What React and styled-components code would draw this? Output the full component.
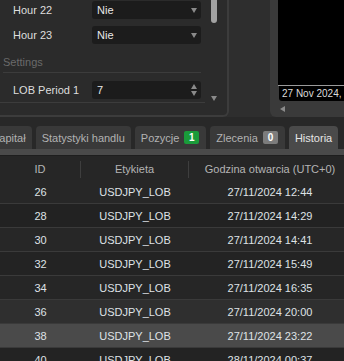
import React from "react";
import styled, { createGlobalStyle } from "styled-components";

const Global = createGlobalStyle`
  html, body { margin: 0; padding: 0; background: #282828; }
  body { font-family: "Liberation Sans", Arial, sans-serif; font-size: 11px; overflow: hidden; }
  #root { width: 344px; height: 361px; overflow: hidden; }
`;

const Page = styled.div`
  width: 344px;
  height: 361px;
  overflow: hidden;
  display: flex;
  flex-direction: column;
  background: #282828;
`;

const Top = styled.div`
  display: flex;
  height: 117px;
  flex: none;
  background: #2e2e2e;
`;

const SettingsPanel = styled.div`
  width: 229px;
  flex: none;
  box-sizing: border-box;
  background: #2b2b2b;
  border-right: 2px solid #3c3c3c;
  border-bottom: 2px solid #3c3c3c;
  border-bottom-right-radius: 6px;
  display: flex;
`;

const Form = styled.div`
  width: 206px;
  display: flex;
  flex-direction: column;
  padding-top: 1px;
`;

const Field = styled.div`
  display: flex;
  align-items: center;
  height: 18px;
  margin-top: ${(p) => p.$mt || 0}px;
`;

const Label = styled.div`
  width: 92px;
  box-sizing: border-box;
  padding-left: 13px;
  color: #dedede;
  white-space: nowrap;
`;

const Select = styled.div`
  width: 109px;
  height: 18px;
  box-sizing: border-box;
  background: #1c1c1c;
  border-radius: 3px;
  display: flex;
  align-items: center;
  justify-content: space-between;
  padding: 0 4px 0 5px;
  color: #e8e8e8;
`;

const SectionTitle = styled.div`
  margin-top: 11px;
  height: 14px;
  line-height: 14px;
  padding-left: 3px;
  color: #6a6a6a;
`;

const Rule = styled.div`
  height: 1px;
  background: #3c3c3c;
  margin: ${(p) => p.$m};
`;

const Scrollbar = styled.div`
  width: 21px;
  display: flex;
  flex-direction: column;
  align-items: flex-start;
  padding-left: 5px;
  box-sizing: border-box;
  padding-bottom: 14px;
`;

const Thumb = styled.div`
  width: 6px;
  height: 23px;
  border-radius: 0 0 3px 3px;
  background: #a2a2a2;
`;

const ScrollDown = styled.div`
  margin-top: auto;
  display: flex;
`;

const Spinner = styled.div`
  display: flex;
  flex-direction: column;
  gap: 2px;
`;

const GapArea = styled.div`
  flex: 1;
`;

const ChartPanel = styled.div`
  width: 74px;
  flex: none;
  background: #3a3a3a;
  border-bottom-left-radius: 6px;
  display: flex;
  flex-direction: column;
  padding-left: 8px;
  box-sizing: border-box;
`;

const Chart = styled.div`
  height: 85px;
  background: #000;
  border-bottom: 1px solid #9a9a9a;
`;

const TimeAxis = styled.div`
  height: 15px;
  display: flex;
  padding-left: 1px;
`;

const TimeLabel = styled.div`
  flex: 1;
  background: #000;
  color: #dcdcdc;
  border-radius: 0 0 0 3px;
  padding-left: 3px;
  font-size: 10px;
  line-height: 15px;
  white-space: nowrap;
  overflow: hidden;
`;

const HScroll = styled.div`
  flex: 1;
  display: flex;
  align-items: center;
  padding-left: 2px;
`;

const TabStrip = styled.div`
  height: 32px;
  flex: none;
  display: flex;
  align-items: flex-end;
  overflow: hidden;
  background: #282828;
`;

const TabList = styled.div`
  display: flex;
  gap: 4px;
  margin-left: -14px;
`;

const Tab = styled.div`
  height: 23px;
  box-sizing: border-box;
  padding: 0 ${(p) => (p.$badge ? 7 : 6)}px 0 6px;
  border-radius: 4px 4px 0 0;
  background: ${(p) => (p.$active ? "#4a4a4a" : "#393939")};
  color: ${(p) => (p.$active ? "#e6e6e6" : "#b2b2b2")};
  display: flex;
  align-items: center;
  gap: 5px;
  white-space: nowrap;
`;

const Badge = styled.span`
  min-width: 15px;
  height: 13px;
  border-radius: 2px;
  background: ${(p) => (p.$green ? "#1a9b3a" : "#7c7c7c")};
  color: #fff;
  font-size: 10px;
  font-weight: bold;
  display: flex;
  align-items: center;
  justify-content: center;
`;

const ActiveBand = styled.div`
  height: 6px;
  flex: none;
  background: #4a4a4a;
  border-bottom: 1px solid #1e1e1e;
`;

const cols = "80px 1px 107px 1px 162px";

const HeaderRow = styled.div`
  display: grid;
  grid-template-columns: ${cols};
  height: 24px;
  box-sizing: border-box;
  padding-top: 2px;
  flex: none;
  align-items: center;
  background: #262626;
  color: #b4b4b4;
`;

const HeadCell = styled.div`
  text-align: center;
  white-space: nowrap;
`;

const Divider = styled.div`
  height: 17px;
  background: #3e3e3e;
`;

const BodyRow = styled.div`
  display: grid;
  grid-template-columns: 81px 108px 162px;
  height: 24px;
  flex: none;
  box-sizing: border-box;
  align-items: center;
  border-bottom: 1px solid #3a3a3a;
  background: ${(p) => p.$bg};
  color: #dfe2e6;
`;

const Cell = styled.div`
  text-align: center;
  white-space: nowrap;
`;

const Arrow = ({ up, color = "#8a8a8a" }) => (
  <svg width="6" height="5" viewBox="0 0 6 5">
    <polygon points={up ? "0,5 6,5 3,0" : "0,0 6,0 3,5"} fill={color} />
  </svg>
);

const rows = [
  ["26", "27/11/2024 12:44", "#272727"],
  ["28", "27/11/2024 14:29", "#222222"],
  ["30", "27/11/2024 14:41", "#272727"],
  ["32", "27/11/2024 15:49", "#232323"],
  ["34", "27/11/2024 16:35", "#262626"],
  ["36", "27/11/2024 20:00", "#2f2f2f"],
  ["38", "27/11/2024 23:22", "#4a4a4a"],
  ["40", "28/11/2024 00:37", "#232323"],
];

export default function App() {
  return (
    <Page>
      <Global />
      <Top>
        <SettingsPanel>
          <Form>
            <Field>
              <Label>Hour 22</Label>
              <Select>
                Nie
                <Arrow />
              </Select>
            </Field>
            <Field $mt={7}>
              <Label>Hour 23</Label>
              <Select>
                Nie
                <Arrow />
              </Select>
            </Field>
            <SectionTitle>Settings</SectionTitle>
            <Rule $m="3px 5px 0 3px" />
            <Field $mt={8}>
              <Label>LOB Period 1</Label>
              <Select>
                7
                <Spinner>
                  <Arrow up />
                  <Arrow />
                </Spinner>
              </Select>
            </Field>
            <Rule $m="3px 1px 0 0" />
          </Form>
          <Scrollbar>
            <Thumb />
            <ScrollDown>
              <Arrow />
            </ScrollDown>
          </Scrollbar>
        </SettingsPanel>
        <GapArea />
        <ChartPanel>
          <Chart />
          <TimeAxis>
            <TimeLabel>27 Nov 2024,</TimeLabel>
          </TimeAxis>
          <HScroll>
            <svg width="5" height="6" viewBox="0 0 5 6">
              <polygon points="5,0 5,6 0,3" fill="#8a8a8a" />
            </svg>
          </HScroll>
        </ChartPanel>
      </Top>
      <TabStrip>
        <TabList>
          <Tab>Kapitał</Tab>
          <Tab>Statystyki handlu</Tab>
          <Tab $badge>
            Pozycje <Badge $green>1</Badge>
          </Tab>
          <Tab $badge>
            Zlecenia <Badge>0</Badge>
          </Tab>
          <Tab $active>Historia</Tab>
        </TabList>
      </TabStrip>
      <ActiveBand />
      <HeaderRow>
        <HeadCell>ID</HeadCell>
        <Divider />
        <HeadCell>Etykieta</HeadCell>
        <Divider />
        <HeadCell>Godzina otwarcia (UTC+0)</HeadCell>
      </HeaderRow>
      {rows.map(([id, time, bg]) => (
        <BodyRow key={id} $bg={bg}>
          <Cell>{id}</Cell>
          <Cell>USDJPY_LOB</Cell>
          <Cell>{time}</Cell>
        </BodyRow>
      ))}
    </Page>
  );
}
